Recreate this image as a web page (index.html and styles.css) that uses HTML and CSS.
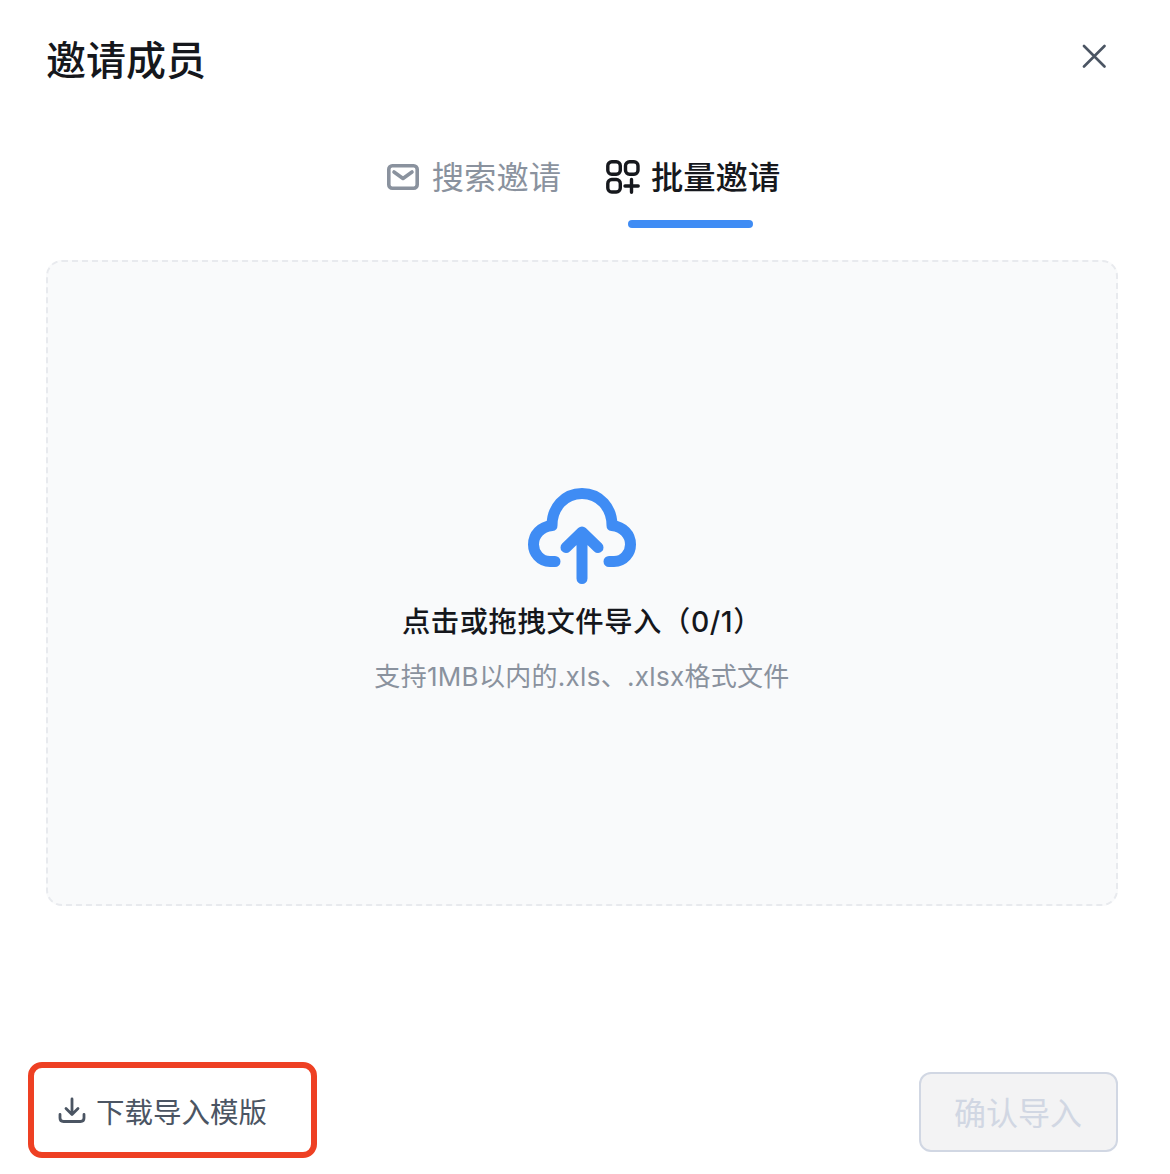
FILE: index.html
```html
<!DOCTYPE html>
<html lang="zh-CN">
<head>
<meta charset="utf-8">
<title>邀请成员</title>
<link rel="stylesheet" href="styles.css">
</head>
<body>
<div class="dialog">
  <header class="head">
    <h1 class="title">邀请成员</h1>
    <svg class="close" viewBox="0 0 24 24" width="24" height="24" fill="none" stroke="#4b5563" stroke-width="2.600" stroke-linecap="round"><path d="M2 2 L22.500 22.500 M22.500 2 L2 22.500"/></svg>
  </header>
  <nav class="tabs">
    <div class="tab">
      <svg class="tab-icon" viewBox="0 0 32 26" width="32" height="26" fill="none" stroke="#8a929e" stroke-width="3.600" stroke-linecap="round" stroke-linejoin="round"><rect x="1.800" y="1.800" width="28.400" height="22.400" rx="3.500"/><path d="M7 8 L16 14.500 L25 8"/></svg>
      <span class="tab-label">搜索邀请</span>
    </div>
    <div class="tab active">
      <svg class="tab-icon" viewBox="0 0 34 34" width="34" height="34" fill="none" stroke="#16181d" stroke-width="3.400" stroke-linecap="round" stroke-linejoin="round"><rect x="1.800" y="1.800" width="12.500" height="12.500" rx="4"/><rect x="19.500" y="1.800" width="12.500" height="12.500" rx="4"/><rect x="1.800" y="19.500" width="12.500" height="12.500" rx="4"/><path d="M25.500 19.500 V32.200 M19 26 H32.200"/></svg>
      <span class="tab-label">批量邀请</span>
    </div>
  </nav>
  <section class="drop">
    <svg class="cloud" viewBox="0 0 108 96" width="108" height="96" fill="none" stroke="#3f8cf4" stroke-width="11" stroke-linecap="round" stroke-linejoin="round"><path d="M27 73.500 H22 C12 73.500 5.500 65 5.500 56.500 C5.500 46.500 12.500 39 24 37.500 C24 20 36 5.500 54 5.500 C72 5.500 84 20 84 37.500 C95.500 39 102.500 46.500 102.500 56.500 C102.500 65 96 73.500 86 73.500 H81"/><path d="M54 90.500 V45 M38 59.500 L54 44 L70 59.500"/></svg>
    <p class="drop-title">点击或拖拽文件导入（0/1）</p>
    <p class="drop-hint">支持1MB以内的.xls、.xlsx格式文件</p>
  </section>
  <footer class="foot">
    <a class="template">
      <svg viewBox="0 0 28 26" width="28" height="26" fill="none" stroke="#4b5563" stroke-width="2.800" stroke-linecap="round" stroke-linejoin="round"><path d="M14 2 V17 M8 11.500 L14 17.500 L20 11.500"/><path d="M2 17.500 V21 C2 23 3.200 24.500 5.500 24.500 H22.500 C24.800 24.500 26 23 26 21 V17.500"/></svg>
      <span>下载导入模版</span>
    </a>
    <button class="confirm" disabled><span class="confirm-label">确认导入</span></button>
  </footer>
</div>
</body>
</html>
```
FILE: styles.css
```css
* { box-sizing: border-box; }
html, body { margin: 0; padding: 0; background: #fff; }
body { width: 1170px; height: 1174px; overflow: hidden; font-family: Inter, "Noto Sans CJK SC", "Noto Sans", sans-serif; }
.dialog { padding: 0 52px 16px 46px; height: 1174px; display: flex; flex-direction: column; }
.head { display: flex; justify-content: space-between; align-items: center; height: 120px; }
.title { margin: 1px 0 0; font-size: 40px; font-weight: 500; line-height: 115px; color: #15171c; }
.close { margin-right: 12px; margin-top: -8px; }
.tabs { display: flex; justify-content: center; gap: 45px; height: 108px; padding-left: 3px; }
.tab { position: relative; display: flex; align-items: center; gap: 13px; height: 108px; font-size: 32.300px; color: #8a929e; }
.tab-icon { flex: none; margin-top: 5px; }
.tab-label { margin-top: 2px; }
.tab.active { gap: 11px; color: #16181d; font-weight: 500; }
.tab.active::after { content: ""; position: absolute; left: 22px; width: 125px; top: 100px; height: 8px; border-radius: 4px; background: #3f8cf4; }
.drop { margin-top: 32px; height: 646px; border: 2px dashed #e8eaee; border-radius: 16px; background: #f9fafb; display: flex; flex-direction: column; align-items: center; padding-top: 226px; }
.cloud { flex: none; }
.drop-title { margin: 18px 0 0; font-size: 28.300px; letter-spacing: 0.600px; line-height: 40px; font-weight: 500; color: #15171c; }
.drop-hint { margin: 15px 0 0; font-size: 26px; letter-spacing: 0.300px; line-height: 40px; color: #8a929e; }
.foot { margin-top: auto; display: flex; justify-content: space-between; align-items: flex-end; }
.template { display: flex; align-items: center; gap: 10px; width: 289px; height: 96px; margin-left: -18px; padding-left: 24px; border: 6px solid #ee4023; border-radius: 14px; font-size: 28.500px; color: #4b5563; }
.confirm { width: 199px; height: 80px; margin-bottom: 6px; border: 2px solid #d1d7e3; border-radius: 12px; background: #f3f3f4; font: inherit; font-size: 32px; color: #d1d7e3; padding: 0 1px 3px 0; }
.confirm-label { display: block; }
```
